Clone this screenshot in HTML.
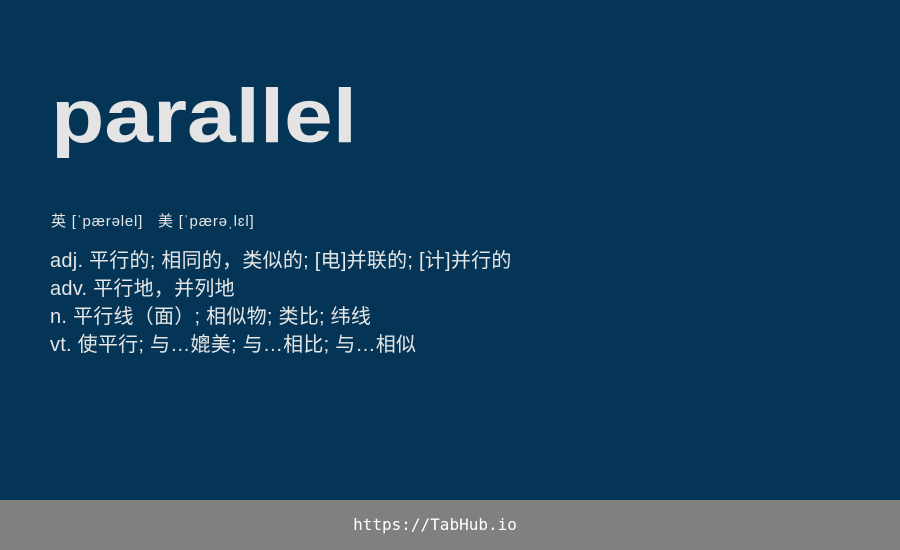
<!DOCTYPE html>
<html><head><meta charset="utf-8"><style>
body{margin:0;width:900px;height:550px;background:#043556;position:relative;overflow:hidden;font-family:"Liberation Sans","Noto Sans CJK SC",sans-serif;color:#e6e6e6}
.w{position:absolute;left:51px;top:72px;font-size:76px;font-weight:bold;line-height:90px;color:#e4e4e4;transform:scaleX(1.15);transform-origin:0 0}
.ph{position:absolute;left:51px;top:213px;font-size:15px;letter-spacing:0.8px;line-height:18px}
.d{position:absolute;left:50px;top:247px;font-size:20px;letter-spacing:0.25px;line-height:28px}
.f{position:absolute;left:350px;top:500px;width:170px;height:50px;color:#fff;font-family:"DejaVu Sans Mono",monospace;font-size:16px;line-height:50px;text-align:center;white-space:nowrap}
.fb{position:absolute;left:0;top:500px;width:900px;height:50px;background:#808080}
</style></head><body>
<div class="w">parallel</div>
<div class="ph">英 [ˈpærəlel] &nbsp;&nbsp;美 [ˈpærəˌlɛl]</div>
<div class="d">adj. 平行的; 相同的，类似的; [电]并联的; [计]并行的<br>adv. 平行地，并列地<br>n. 平行线（面）; 相似物; 类比; 纬线<br>vt. 使平行; 与…媲美; 与…相比; 与…相似</div>
<div class="fb"></div>
<div class="f">https://TabHub.io</div>
</body></html>
